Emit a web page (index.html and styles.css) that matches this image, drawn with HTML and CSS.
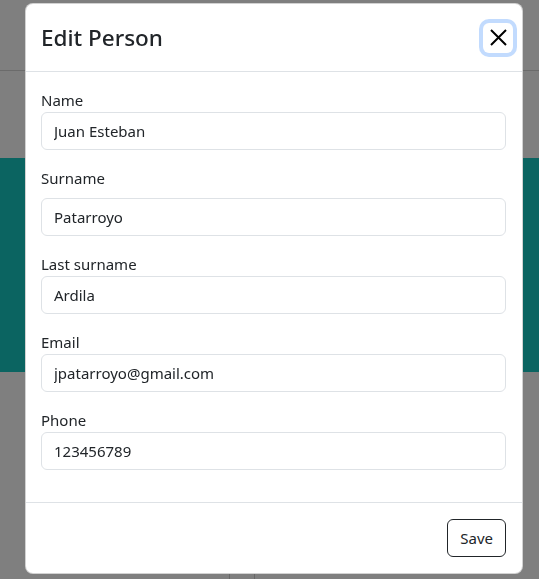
FILE: index.html
```html
<!DOCTYPE html>
<html lang="en">
<head>
<meta charset="utf-8">
<title>Edit Person</title>
<link rel="stylesheet" href="styles.css">
</head>
<body>
<div class="page">
  <div class="topbar"></div>
  <div class="gap"></div>
  <div class="band"></div>
  <div class="content"><div class="col"></div></div>
</div>
<div class="backdrop"></div>
<div class="modal-wrap">
  <div class="modal">
    <div class="modal-header">
      <h4 class="modal-title">Edit Person</h4>
      <button class="btn-close" aria-label="Close">
        <svg width="17" height="17" viewBox="0 0 17 17"><path d="M1 1L16 16M16 1L1 16" stroke="#000" stroke-width="2" fill="none"/></svg>
      </button>
    </div>
    <div class="modal-body">
      <div class="group">
        <label class="lbl">Name</label>
        <input class="input" value="Juan Esteban">
      </div>
      <div class="group">
        <label class="lbl lbl-spaced">Surname</label>
        <input class="input" value="Patarroyo">
      </div>
      <div class="group">
        <label class="lbl">Last surname</label>
        <input class="input" value="Ardila">
      </div>
      <div class="group">
        <label class="lbl">Email</label>
        <input class="input" value="jpatarroyo@gmail.com">
      </div>
      <div class="group">
        <label class="lbl">Phone</label>
        <input class="input" value="123456789">
      </div>
    </div>
    <div class="modal-footer">
      <button class="btn-save">Save</button>
    </div>
  </div>
</div>
</body>
</html>
```
FILE: styles.css
```css
html, body {
  margin: 0;
  padding: 0;
}
body {
  font-family: "Noto Sans", "Open Sans", sans-serif;
  color: #212529;
  background: #fff;
  overflow: hidden;
}
.page {
  height: 579px;
  background: #fff;
  display: flex;
  flex-direction: column;
}
.topbar {
  height: 70px;
  border-bottom: 1px solid #d6d6d6;
}
.gap {
  height: 87px;
}
.band {
  height: 214px;
  background: #16c8c2;
}
.content {
  flex: 1;
  padding-left: 229px;
  display: flex;
}
.col {
  width: 24px;
  border-left: 1px solid #d0d0d0;
  border-right: 1px solid #d0d0d0;
}
.backdrop {
  position: fixed;
  inset: 0;
  background: rgba(0, 0, 0, 0.5);
}
.modal-wrap {
  position: fixed;
  inset: 0;
  padding: 3px 0 0 25px;
}
.modal {
  width: 498px;
  box-sizing: border-box;
  background: #fff;
  border: 1px solid rgba(0, 0, 0, 0.175);
  border-radius: 8px;
  display: flex;
  flex-direction: column;
}
.modal-header {
  padding: 16px 16px 16px 15px;
  display: flex;
  align-items: center;
  justify-content: space-between;
  border-bottom: 1px solid #dee2e6;
  height: 35px;
}
.modal-title {
  margin: 0;
  font-size: 22.5px;
  font-weight: 500;
  line-height: 35px;
  color: #212529;
}
.btn-close {
  width: 30px;
  height: 30px;
  margin-right: -7px;
  padding: 0;
  border: 0;
  border-radius: 6px;
  background: transparent;
  box-shadow: 0 0 0 4px rgba(13, 110, 253, 0.25);
  display: flex;
  align-items: center;
  justify-content: center;
}
.modal-body {
  padding: 16px 16px 16px 15px;
}
.group {
  display: flex;
  flex-direction: column;
  margin-bottom: 16px;
}
.lbl {
  font-size: 15px;
  line-height: 24px;
  color: #212529;
}
.lbl-spaced {
  margin-bottom: 8px;
}
.input {
  height: 38px;
  box-sizing: border-box;
  padding: 6px 12px;
  font-family: inherit;
  font-size: 15px;
  color: #212529;
  border: 1px solid #dee2e6;
  border-radius: 6px;
  background: #fff;
  outline: none;
}
.modal-footer {
  border-top: 1px solid #dee2e6;
  padding: 16px;
  display: flex;
  justify-content: flex-end;
}
.btn-save {
  height: 38px;
  padding: 6px 12px;
  font-family: inherit;
  font-size: 15px;
  color: #212529;
  background: #fff;
  border: 1px solid #212529;
  border-radius: 6px;
}
```
